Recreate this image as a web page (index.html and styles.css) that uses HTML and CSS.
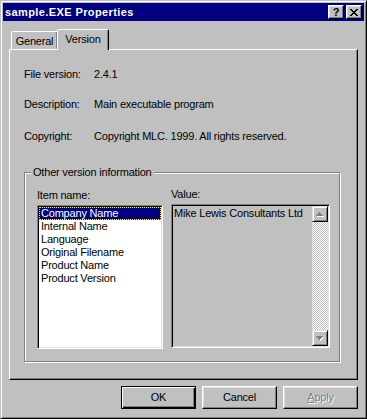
FILE: index.html
```html
<!DOCTYPE html>
<html>
<head>
<meta charset="utf-8">
<link rel="stylesheet" href="styles.css">
</head>
<body>
<div class="window">
  <div class="titlebar">
    <span class="title">sample.EXE Properties</span>
    <div class="tbtns">
      <div class="tbtn help">?</div>
      <div class="tbtn">
        <svg width="8" height="7" viewBox="0 0 8 7" shape-rendering="crispEdges"><path d="M0 0h2v1h-2zM6 0h2v1h-2zM1 1h2v1h-2zM5 1h2v1h-2zM2 2h4v1h-4zM3 3h2v1h-2zM2 4h4v1h-4zM1 5h2v1h-2zM5 5h2v1h-2zM0 6h2v1h-2zM6 6h2v1h-2z" fill="#000"/></svg>
      </div>
    </div>
  </div>
  <div class="body">
    <div class="tabs">
      <div class="tab general">General</div>
      <div class="tab active">Version</div>
    </div>
    <div class="panel">
      <div class="row"><span class="lbl">File version:</span><span>2.4.1</span></div>
      <div class="row r2"><span class="lbl">Description:</span><span>Main executable program</span></div>
      <div class="row r3"><span class="lbl">Copyright:</span><span>Copyright MLC. 1999. All rights reserved.</span></div>
      <div class="group">
        <div class="legend">Other version information</div>
        <div class="cols">
          <div class="col">
            <div class="cap">Item name:</div>
            <div class="listbox">
              <div class="item sel">Company Name</div>
              <div class="item">Internal Name</div>
              <div class="item">Language</div>
              <div class="item">Original Filename</div>
              <div class="item">Product Name</div>
              <div class="item">Product Version</div>
            </div>
          </div>
          <div class="col valcol">
            <div class="cap">Value:</div>
            <div class="valbox">
              <div class="valtext">Mike Lewis Consultants Ltd</div>
              <div class="scroll">
                <div class="sbtn">
                  <svg width="8" height="5" viewBox="0 0 8 5" shape-rendering="crispEdges"><path d="M4 1h1v1h-1zM3 2h3v1h-3zM2 3h5v1h-5zM1 4h7v1h-7z" fill="#fff"/><path d="M3 0h1v1h-1zM2 1h3v1h-3zM1 2h5v1h-5zM0 3h7v1h-7z" fill="#808080"/></svg>
                </div>
                <div class="track"></div>
                <div class="sbtn">
                  <svg width="8" height="5" viewBox="0 0 8 5" shape-rendering="crispEdges"><path d="M1 1h7v1h-7zM2 2h5v1h-5zM3 3h3v1h-3zM4 4h1v1h-1z" fill="#fff"/><path d="M0 0h7v1h-7zM1 1h5v1h-5zM2 2h3v1h-3zM3 3h1v1h-1z" fill="#808080"/></svg>
                </div>
              </div>
            </div>
          </div>
        </div>
      </div>
    </div>
    <div class="buttons">
      <div class="btn default">OK</div>
      <div class="btn">Cancel</div>
      <div class="btn disabled"><span><u>A</u>pply</span></div>
    </div>
  </div>
</div>
</body>
</html>
```

FILE: styles.css
```css
* { box-sizing: border-box; }
body {
  margin: 0;
  background: #c0c0c0;
  font-family: "Liberation Sans", Arial, sans-serif;
  font-size: 11px;
  letter-spacing: -0.2px;
  color: #000;
}
.window {
  width: 367px;
  height: 419px;
  background: #c0c0c0;
  border: 1px solid;
  border-color: #c0c0c0 #000 #000 #c0c0c0;
  box-shadow: inset 1px 1px #fff, inset -1px -1px #808080;
  padding: 2px;
}
.titlebar {
  height: 18px;
  background: #000080;
  color: #fff;
  display: flex;
  align-items: center;
  justify-content: space-between;
  padding: 0 2px;
}
.title {
  font-weight: bold;
  line-height: 13px;
  letter-spacing: 0.4px;
}
.tbtns { display: flex; gap: 2px; }
.tbtn {
  width: 16px;
  height: 14px;
  background: #c0c0c0;
  border: 1px solid;
  border-color: #fff #000 #000 #fff;
  box-shadow: inset -1px -1px #808080, inset 1px 1px #dfdfdf;
  display: flex;
  align-items: center;
  justify-content: center;
  color: #000;
}
.tbtn.help { font-weight: bold; font-size: 11px; line-height: 12px; letter-spacing: 0; }
.body { padding: 8px 6px 0 6px; }
.tabs {
  display: flex;
  align-items: flex-end;
  height: 20px;
  padding-left: 2px;
}
.tab {
  height: 18px;
  border: 1px solid;
  border-bottom: none;
  border-color: #fff #000 transparent #fff;
  box-shadow: inset -1px 0 #808080;
  border-radius: 2px 2px 0 0;
  padding-top: 3px;
  line-height: 13px;
  text-align: center;
  background: #c0c0c0;
}
.tab.general { width: 47px; }
.tab.active {
  width: 52px;
  height: 21px;
  margin-left: -1px;
  margin-bottom: -1px;
  position: relative;
  z-index: 1;
}
.panel {
  width: 349px;
  height: 331px;
  border: 1px solid;
  border-color: #fff #000 #000 #fff;
  box-shadow: inset -1px -1px #808080;
  padding: 18px 0 0 14px;
}
.row { display: flex; line-height: 13px; }
.lbl { width: 70px; }
.r2 { margin-top: 17px; }
.r3 { margin-top: 19px; }
.group {
  position: relative;
  width: 316px;
  height: 190px;
  margin-top: 29px;
  border: 1px solid #808080;
  box-shadow: inset 1px 1px #fff, 1px 1px #fff;
  padding: 16px 0 0 12px;
}
.legend {
  position: absolute;
  left: 6px;
  top: -7px;
  padding: 0 2px;
  background: #c0c0c0;
  line-height: 13px;
}
.cols { display: flex; gap: 8px; }
.cap { line-height: 13px; margin-bottom: 3px; }
.valcol { margin-top: -1px; }
.listbox {
  width: 126px;
  height: 144px;
  background: #fff;
  border: 1px solid;
  border-color: #808080 #fff #fff #808080;
  box-shadow: inset 1px 1px #000, inset -1px -1px #dfdfdf;
  padding: 1px;
}
.item {
  height: 13px;
  line-height: 13px;
  padding-left: 2px;
  white-space: nowrap;
}
.item.sel {
  background: #000080;
  color: #fff;
  outline: 1px dotted #ffff00;
  outline-offset: -1px;
}
.valbox {
  width: 159px;
  height: 144px;
  background: #c0c0c0;
  border: 1px solid;
  border-color: #808080 #fff #fff #808080;
  box-shadow: inset 1px 1px #000, inset -1px -1px #dfdfdf;
  padding: 1px;
  display: flex;
}
.valtext {
  flex: 1;
  line-height: 13px;
  padding: 1px 0 0 1px;
  white-space: nowrap;
}
.scroll {
  width: 16px;
  display: flex;
  flex-direction: column;
}
.sbtn {
  width: 16px;
  height: 16px;
  background: #c0c0c0;
  border: 1px solid;
  border-color: #dfdfdf #000 #000 #dfdfdf;
  box-shadow: inset 1px 1px #fff, inset -1px -1px #808080;
  display: flex;
  align-items: center;
  justify-content: center;
}
.track {
  flex: 1;
  background: repeating-conic-gradient(#fff 0 25%, #c0c0c0 0 50%) 0 0 / 2px 2px;
}
.buttons {
  display: flex;
  justify-content: flex-end;
  gap: 6px;
  margin-top: 6px;
}
.btn {
  width: 75px;
  height: 23px;
  border: 1px solid;
  border-color: #fff #000 #000 #fff;
  box-shadow: inset -1px -1px #808080, inset 1px 1px #dfdfdf;
  display: flex;
  align-items: center;
  justify-content: center;
  line-height: 13px;
}
.btn.default {
  border-color: #000;
  box-shadow: inset 1px 1px #fff, inset -1px -1px #000, inset -2px -2px #808080;
}
.btn.disabled {
  color: #808080;
  text-shadow: 1px 1px #fff;
}
.btn.disabled u { text-decoration-color: #808080; }
```
